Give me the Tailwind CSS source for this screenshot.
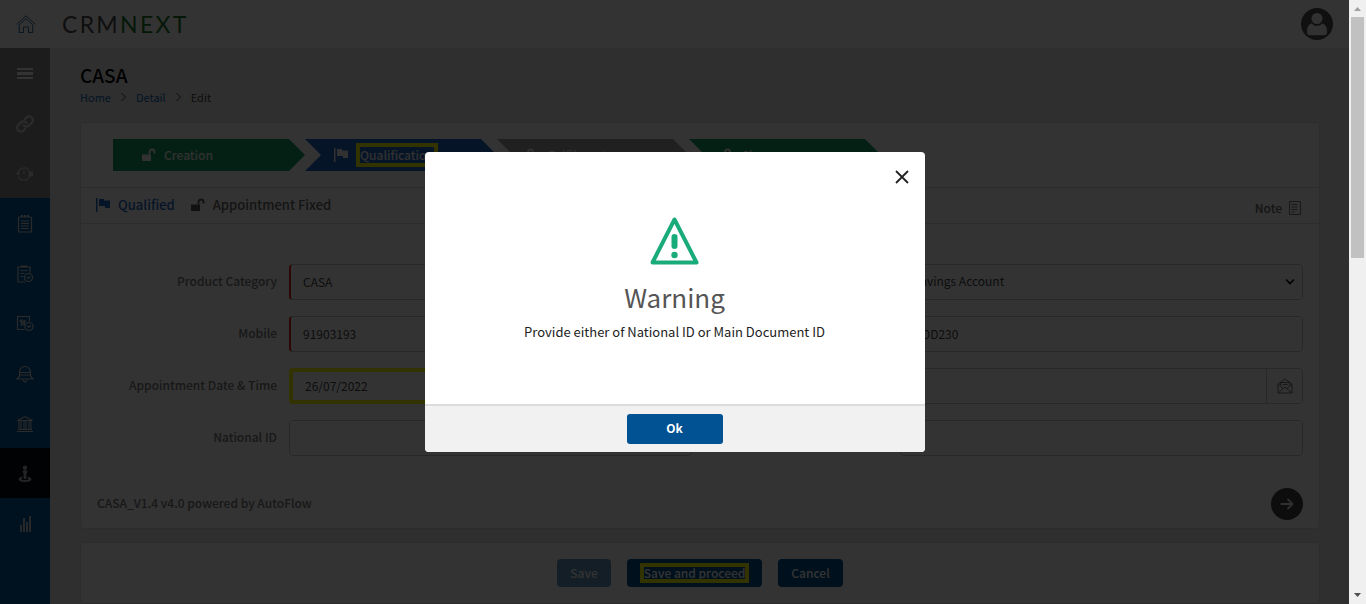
<!DOCTYPE html>
<html lang="en">
<head>
<meta charset="utf-8">
<meta name="viewport" content="width=device-width, initial-scale=1">
<title>CASA - CRMNEXT</title>
<script src="https://cdn.jsdelivr.net/npm/@tailwindcss/browser@4"></script>
</head>
<body class="flex h-screen overflow-hidden bg-[#ebebeb] font-['Noto_Sans_CJK_SC','Noto_Sans',sans-serif] text-[12px] leading-5 text-[#444]">

<div class="relative flex min-w-0 flex-1 flex-col overflow-hidden">
  <header class="flex h-12 shrink-0 items-center bg-white pr-4">
    <a href="#" aria-label="Home" class="flex w-[50px] justify-center pt-[2px] pl-[2px] text-[#2f6a9c]">
      <svg class="size-5" viewBox="0 0 20 20" fill="none" stroke="currentColor" stroke-width="1" stroke-linejoin="round"><path d="M.5 9.500 10 .8l9.500 8.700M3.200 9.800 10 3.600l6.800 6.200V17.500h-4.300v-5.500h-5v5.500H3.200z"/></svg>
    </a>
    <div class="ml-3 flex-1 font-['Lato',sans-serif] text-[23px] leading-6 tracking-widest text-[#4a4a4a]">CRM<span class="text-[#1c7a2c]">NEXT</span></div>
    <button aria-label="Profile" class="size-8 rounded-full">
      <svg class="size-8" viewBox="0 0 32 32"><circle cx="16" cy="16" r="16" fill="#4f4f4f"/><g fill="#f2f2f2"><circle cx="16" cy="10.500" r="5.500"/><path d="M10.700 15.200c1.300 1.700 3 2.600 5.300 2.600s4-.9 5.300-2.600C24.600 16.300 26 19.400 26 23v1.500c0 1.800-1 2.700-2.800 2.700H8.800C7 27.200 6 26.300 6 24.500V23c0-3.600 1.400-6.700 4.700-7.800z"/></g></svg>
    </button>
  </header>

  <div class="flex min-h-0 flex-1">
    <nav aria-label="Main" class="flex w-[50px] shrink-0 flex-col bg-[#005a99] text-[#d4d4d4]">
      <div class="flex flex-col bg-[#8c8c8c]">
        <button aria-label="Menu" class="flex h-[50px] items-center justify-center"><svg class="size-[18px]" viewBox="0 0 18 18" fill="#fff"><path d="M1 4h16v2H1zM1 8h16v3H1zM1 13h16v2H1z"/></svg></button>
        <a href="#" aria-label="Links" class="flex h-[50px] items-center justify-center pt-px"><svg class="size-[18px]" viewBox="0 0 24 24" fill="none" stroke="currentColor" stroke-width="3" stroke-linecap="round"><path d="M10 13.500a5 5 0 0 0 7.500.5l3.500-3.500a5 5 0 0 0-7.100-7.100l-2.200 2.200"/><path d="M14 10.500a5 5 0 0 0-7.500-.5L3 13.500a5 5 0 0 0 7.100 7.100l2.200-2.200"/></svg></a>
        <a href="#" aria-label="History" class="flex h-[50px] items-center justify-center pt-px"><svg class="size-[18px]" viewBox="0 0 18 18" fill="none" stroke="currentColor" stroke-width="1.200"><path d="M2 9a6 6 0 0 1 11.500-2.400M2.500 11.500a6 6 0 0 0 11 0M.3 8 2 9.700 3.700 8M8 5.200v4"/><path d="M12.500 6.500H17v5h-4.500z" fill="currentColor" stroke="none"/></svg></a>
      </div>
      <a href="#" aria-label="Tasks" class="flex h-[50px] items-center justify-center pt-px"><svg class="size-[18px]" viewBox="0 0 18 18" fill="none" stroke="currentColor" stroke-width="1.200"><rect x="2.500" y="2" width="13" height="15" rx="1"/><path d="M5 1h9" stroke-dasharray="2 1" stroke-width="2"/><path d="M5 6h8M5 8.500h8M5 11h8M5 13.500h8"/></svg></a>
      <a href="#" aria-label="Scheduled tasks" class="flex h-[50px] items-center justify-center pt-px"><svg class="size-[18px]" viewBox="0 0 18 18" fill="none" stroke="currentColor" stroke-width="1.200"><path d="M14 7.500V2H2v15h7M5 1h6M4.500 5.500h7M4.500 8.500h4M4.500 11.500h3"/><circle cx="12.500" cy="12.500" r="4"/><path d="m10.800 12 1.700 1.400 1.700-2"/></svg></a>
      <a href="#" aria-label="Calendar" class="flex h-[50px] items-center justify-center pt-px"><svg class="size-[18px]" viewBox="0 0 18 18" fill="none" stroke="currentColor" stroke-width="1.200"><path d="M8.500 14.500H1.500v-13h12V6"/><path d="M3.800 6.500 5.600 5.300v5.500M9.800 6H8v4.500" stroke-width="1.700"/><circle cx="13" cy="11.500" r="4"/><path d="m11.200 10.800 1.800 1.700 1.800-2"/></svg></a>
      <a href="#" aria-label="Alerts" class="flex h-[50px] items-center justify-center pt-px"><svg class="size-[18px]" viewBox="0 0 18 18" fill="none" stroke="currentColor" stroke-width="1.200"><path d="M3.500 11V7a5.500 5.500 0 0 1 11 0v4l2.500 3H1zM3.500 7.500h11M3.500 10h11M7 15c.2 1.200 1 1.800 2 1.800s1.800-.6 2-1.800"/></svg></a>
      <a href="#" aria-label="Bank" class="flex h-[50px] items-center justify-center pt-px"><svg class="size-[18px]" viewBox="0 0 18 18" fill="none" stroke="currentColor" stroke-width="1.100"><path d="M1.500 5.500 9 1.500l7.500 4zM3 6v8M5 6v8M8 6v8M10 6v8M13 6v8M15 6v8M2 14.500h14M1 16.500h16"/></svg></a>
      <a href="#" aria-label="Leads" aria-current="page" class="flex h-[50px] items-center justify-center bg-[#000a12] pt-px text-[#b4b4b4]"><svg class="size-[18px]" viewBox="0 0 18 18" fill="currentColor"><circle cx="9" cy="2.800" r="2.200"/><path d="M6.500 6 9 5l2.500 1-1 3-.3 5H7.800l-.3-5z"/><path d="M6.500 11.500C1 12.300.8 17 9 17s8-4.700 2.500-5.500v1.600c2 .8 1 2-2.500 2s-4.500-1.200-2.500-2z"/></svg></a>
      <a href="#" aria-label="Reports" class="flex h-[50px] items-center justify-center pt-px"><svg class="size-[18px]" viewBox="0 0 18 18" fill="none" stroke="currentColor" stroke-width="1.800"><path d="M5 17v-7M8 17V3M11 17V7M14 17V1"/></svg></a>
    </nav>

    <main class="flex min-w-0 flex-1 flex-col pt-[15px] pr-[29px] pl-[30px]">
      <h1 class="text-[19px] leading-6 font-medium text-black">CASA</h1>
      <nav aria-label="Breadcrumb" class="flex items-center gap-[10px] text-[11px] leading-5">
        <a href="#" class="text-[#0b66b5]">Home</a>
        <svg class="h-2 w-[5px]" viewBox="0 0 5 8" fill="none" stroke="#444"><path d="m.5 0 4 4-4 4"/></svg>
        <a href="#" class="text-[#0b66b5]">Detail</a>
        <svg class="h-2 w-[5px]" viewBox="0 0 5 8" fill="none" stroke="#444"><path d="m.5 0 4 4-4 4"/></svg>
        <span>Edit</span>
      </nav>

      <section class="mt-[15px] rounded border border-[#dadada] bg-white">
        <ol class="flex px-8 pt-4 pb-4 font-medium text-[#f2f2f2]">
          <li class="flex h-8 w-48 items-center gap-2 bg-[#18a068] pl-[29px] [clip-path:polygon(0_0,176px_0,100%_50%,176px_100%,0_100%)]">
            <svg class="size-[14px]" viewBox="0 0 14 14"><path d="M0 6.500h9V13H0z" fill="currentColor"/><path d="M7.500 6.500V4a2.500 2.500 0 0 1 5 0v1.500" fill="none" stroke="currentColor" stroke-width="1.800"/></svg>Creation</li>
          <li class="flex h-8 w-48 items-center gap-3 bg-[#1f66c4] pl-[29px] [clip-path:polygon(0_0,176px_0,100%_50%,176px_100%,0_100%,16px_50%)]">
            <svg class="size-[14px]" viewBox="0 0 14 14" fill="currentColor"><path d="M0 0h1.500v14H0zM3 1h5v1.500h6V10H9V8H3z"/></svg><span class="leading-4 outline-4 outline-[#ffff00]">Qualification</span></li>
          <li class="flex h-8 w-48 items-center gap-2 bg-[#a0a0a0] pl-[29px] [clip-path:polygon(0_0,176px_0,100%_50%,176px_100%,0_100%,16px_50%)]">
            <svg class="size-[14px]" viewBox="0 0 14 14"><path d="M0 6.500h9V13H0z" fill="currentColor"/><path d="M2 6.500V4a2.500 2.500 0 0 1 5 0v2.500" fill="none" stroke="currentColor" stroke-width="1.800"/></svg>Fulfilment</li>
          <li class="flex h-8 w-48 items-center gap-1 bg-[#18a068] pl-[34px] [clip-path:polygon(0_0,176px_0,100%_50%,176px_100%,0_100%,16px_50%)]">
            <svg class="size-[14px]" viewBox="0 0 14 14"><path d="M0 6.500h9V13H0z" fill="currentColor"/><path d="M2 6.500V4a2.500 2.500 0 0 1 5 0v2.500" fill="none" stroke="currentColor" stroke-width="1.800"/></svg>Closure</li>
        </ol>

        <div class="flex h-[37px] items-center border-y border-[#dadada] pr-[17px] pb-[2px] pl-[15px] text-[13px]">
          <svg class="size-[14px] text-[#1f66c4]" viewBox="0 0 14 14" fill="currentColor"><path d="M0 0h1.500v14H0zM3 1h5v1.500h6V10H9V8H3z"/></svg>
          <span class="ml-2 font-medium text-[#1f66c4]">Qualified</span>
          <svg class="ml-4 size-[14px]" viewBox="0 0 14 14"><path d="M0 6.500h9V13H0z" fill="#555"/><path d="M7.500 6.500V4a2.500 2.500 0 0 1 5 0v1.500" fill="none" stroke="#555" stroke-width="1.800"/></svg>
          <span class="ml-2 flex-1 font-medium text-[#666]">Appointment Fixed</span>
          <button class="flex items-center gap-[6px] pt-[6px] text-[12px] font-medium text-[#666]">Note
            <svg class="size-[14px]" viewBox="0 0 14 14" fill="none" stroke="#777"><path d="M1.500.5h11v13h-11zM3.500 3.500h6M3.500 6h6M3.500 8.500h6M3.500 11h3"/></svg></button>
        </div>

        <form class="grid grid-cols-2 gap-y-4 pt-10 pr-4">
          <div class="flex items-center gap-3">
            <label for="cat" class="w-[196px] pb-[2px] text-right font-medium text-[#777]">Product Category</label>
            <input id="cat" value="CASA" class="h-9 min-w-0 flex-1 rounded border border-l-2 border-[#c8c8c8] border-l-[#e02020] px-3 pb-px">
          </div>
          <div class="flex items-center gap-3">
            <label for="prod" class="w-[196px] pb-[2px] text-right font-medium text-[#777]">Product</label>
            <div class="relative min-w-0 flex-1">
              <select id="prod" class="block h-9 w-full appearance-none rounded border border-[#c8c8c8] px-3 pb-[2px]"><option>Savings Account</option></select>
              <svg class="pointer-events-none absolute top-[14px] right-2 h-2 w-[10px]" viewBox="0 0 10 8" fill="none" stroke="#000" stroke-width="1.700"><path d="m1 1.500 4 4 4-4"/></svg>
            </div>
          </div>
          <div class="flex items-center gap-3">
            <label for="mob" class="w-[196px] pb-[2px] text-right font-medium text-[#777]">Mobile</label>
            <input id="mob" value="91903193" class="h-9 min-w-0 flex-1 rounded border border-l-2 border-[#c8c8c8] border-l-[#e02020] px-3 pb-px">
          </div>
          <div class="flex items-center gap-3">
            <label for="code" class="w-[196px] pb-[2px] text-right font-medium text-[#777]">Code</label>
            <input id="code" value="ODD230" class="h-9 min-w-0 flex-1 rounded border border-[#c8c8c8] px-3 pb-px">
          </div>
          <div class="flex items-center gap-3">
            <label for="appt" class="w-[196px] pb-[2px] text-right font-medium text-[#777]">Appointment Date &amp; Time</label>
            <input id="appt" value="26/07/2022" class="h-9 min-w-0 flex-1 rounded border-4 border-[#ffff00] px-3 pb-px">
          </div>
          <div class="flex items-center gap-3">
            <label for="mail" class="w-[196px] pb-[2px] text-right font-medium text-[#777]">Email</label>
            <div class="flex h-9 min-w-0 flex-1 rounded border border-[#c8c8c8]">
              <input id="mail" class="min-w-0 flex-1 px-3">
              <button type="button" aria-label="Send email" class="flex w-9 items-center justify-center border-l border-[#c8c8c8]">
                <svg class="size-4" viewBox="0 0 16 16" fill="none" stroke="#777"><path d="M1 15V6l7-5 7 5v9zM1 6l5 4.500M15 6l-5 4.500M1 15l7-6 7 6M3.500 7.500V4.500h9v3M5.500 6.500h5"/></svg></button>
            </div>
          </div>
          <div class="flex items-center gap-3">
            <label for="nid" class="w-[196px] pb-[2px] text-right font-medium text-[#777]">National ID</label>
            <input id="nid" class="h-9 min-w-0 flex-1 rounded border border-[#c8c8c8] px-3">
          </div>
          <div class="flex items-center gap-3">
            <label for="mdoc" class="w-[196px] pb-[2px] text-right font-medium text-[#777]">Main Document ID</label>
            <input id="mdoc" class="h-9 min-w-0 flex-1 rounded border border-[#c8c8c8] px-3">
          </div>
        </form>

        <div class="flex items-center justify-between px-4 pt-8 pb-2 font-medium text-[#777]">
          <span class="pb-[2px]">CASA_V1.4 v4.0 powered by AutoFlow</span>
          <button aria-label="Next" class="flex size-8 items-center justify-center rounded-full bg-[#404040]">
            <svg class="size-[14px]" viewBox="0 0 14 14" fill="none" stroke="#eee" stroke-width="1.800"><path d="M.5 7h12M7.500 2l5 5-5 5"/></svg></button>
        </div>
      </section>

      <section class="mt-[13px] flex h-[62px] shrink-0 items-center justify-center gap-4 rounded border border-[#dadada] bg-white font-medium text-white">
        <button class="h-7 rounded bg-[#6295be] px-[13px]">Save</button>
        <button class="flex h-7 items-center rounded bg-[#005293] px-[17px]"><span class="leading-3 outline-4 outline-[#ffff00]">Save and proceed</span></button>
        <button class="h-7 rounded bg-[#005293] px-[13px]">Cancel</button>
      </section>
    </main>
  </div>

  <div class="absolute inset-0 z-10 flex items-center justify-center bg-black/80">
    <div role="dialog" aria-modal="true" aria-labelledby="dlg-title" class="flex h-[300px] w-[500px] flex-col overflow-hidden rounded bg-white">
      <div class="flex justify-end pt-[18px] pr-4">
        <button aria-label="Close"><svg class="size-[14px]" viewBox="0 0 14 14" fill="none" stroke="#222" stroke-width="1.800"><path d="m1 1 12 12M13 1 1 13"/></svg></button>
      </div>
      <div class="flex flex-1 flex-col items-center pt-8">
        <svg class="h-[50px] w-[50px]" viewBox="0 0 50 50" fill="none" stroke="#1aab7a"><path d="M24.500 3.500 46.500 46.500H2.500z" stroke-width="4" stroke-linejoin="round"/><path d="M24.500 21v9" stroke-width="6" stroke-linecap="round"/><circle cx="24.500" cy="39" r="3.200" fill="#1aab7a" stroke="none"/></svg>
        <h2 id="dlg-title" class="mt-[13px] text-[26px] leading-9 text-[#555]">Warning</h2>
        <p class="mt-[5px] text-[13px] leading-6 text-[#222]">Provide either of National ID or Main Document ID</p>
      </div>
      <div class="flex h-12 shrink-0 items-center justify-center border-t-2 border-[#dcdcdc] bg-[#f1f1f1]">
        <button class="h-[30px] w-24 rounded-[3px] bg-[#005293] pb-[2px] font-bold text-white">Ok</button>
      </div>
    </div>
  </div>
</div>

<div aria-hidden="true" class="flex w-[17px] shrink-0 flex-col items-center bg-[#f0f0f0]">
  <svg class="h-[17px] w-[17px]" viewBox="0 0 17 17" fill="#a0a0a0"><path d="M8.500 7 12 11H5z"/></svg>
  <div class="h-[241px] w-[13px] bg-[#c1c1c1]"></div>
  <svg class="mt-auto h-[17px] w-[17px]" viewBox="0 0 17 17" fill="#505050"><path d="M8.500 10 12 6H5z"/></svg>
</div>
</body>
</html>
